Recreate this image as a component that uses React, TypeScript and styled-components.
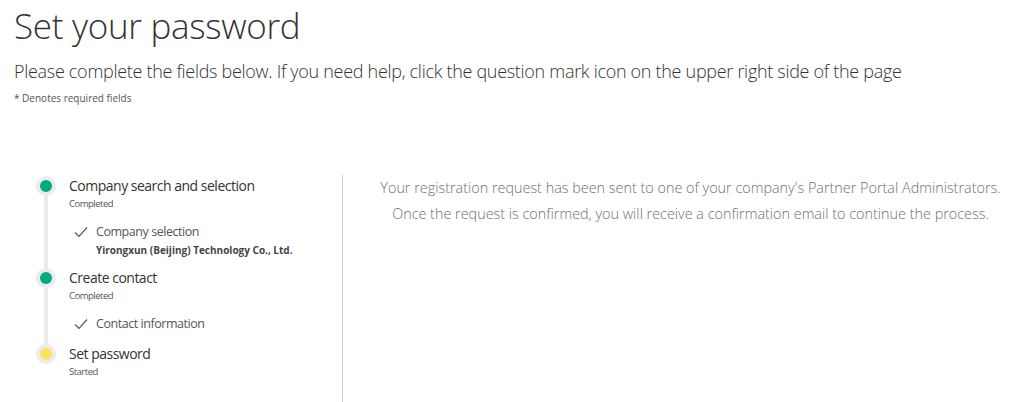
import React from "react";
import styled, { createGlobalStyle } from "styled-components";

const Global = createGlobalStyle`
  html, body { margin: 0; padding: 0; background: #fff; }
  body { font-family: "Open Sans", "Noto Sans", sans-serif; color: #333; }
  * { box-sizing: border-box; }
`;

const Page = styled.div`
  width: 1024px;
  height: 402px;
  overflow: hidden;
  padding: 0 0 0 14px;
`;

const Title = styled.h1`
  margin: 0;
  padding-top: 4px;
  font-size: 35px;
  line-height: 44px;
  font-weight: 300;
  letter-spacing: -0.3px;
  color: #333;
`;

const Subtitle = styled.p`
  margin: 10px 0 0;
  font-size: 18px;
  line-height: 26px;
  font-weight: 300;
  letter-spacing: -0.3px;
  color: #333;
`;

const Required = styled.p`
  margin: 7px 0 0;
  font-size: 10px;
  line-height: 14px;
  color: #555;
`;

const Body = styled.div`
  display: flex;
  margin-top: 70px;
  height: 230px;
`;

const StepsCol = styled.div`
  width: 329px;
  padding: 0 0 0 22px;
  border-right: 1px solid #cfcfcf;
  flex-shrink: 0;
  position: relative;
`;

const Track = styled.div`
  position: absolute;
  left: 30px;
  top: 8px;
  width: 4px;
  height: 174px;
  background: #ececec;
`;

const Step = styled.div`
  display: flex;
  align-items: flex-start;
  position: relative;
`;

const Dot = styled.div<{ $color: string }>`
  width: 20px;
  height: 20px;
  border-radius: 50%;
  background: #ececec;
  display: flex;
  align-items: center;
  justify-content: center;
  flex-shrink: 0;
  margin-top: 1px;
  &::after {
    content: "";
    width: 12px;
    height: 12px;
    border-radius: 50%;
    background: ${(p) => p.$color};
  }
`;

const StepText = styled.div`
  margin-left: 13px;
  display: flex;
  flex-direction: column;
`;

const StepTitle = styled.div`
  font-size: 14px;
  line-height: 22px;
  letter-spacing: -0.5px;
  color: #333;
`;

const StepStatus = styled.div`
  font-size: 9.5px;
  line-height: 14px;
  letter-spacing: -0.5px;
  color: #555;
`;

const SubItem = styled.div`
  display: flex;
  align-items: flex-start;
  margin: 11px 0 9px 5px;
`;

const Check = styled.svg`
  width: 14px;
  height: 14px;
  margin-top: 3px;
  flex-shrink: 0;
`;

const SubText = styled.div`
  margin-left: 8px;
  display: flex;
  flex-direction: column;
`;

const SubTitle = styled.div`
  font-size: 12.5px;
  line-height: 20px;
  letter-spacing: -0.45px;
  color: #555;
`;

const SubDetail = styled.div`
  font-size: 10px;
  line-height: 16px;
  font-weight: 700;
  color: #444;
`;

const Message = styled.div`
  flex: 1;
  padding: 0 10px 0 24px;
  text-align: center;
  font-size: 14.4px;
  line-height: 26px;
  font-weight: 300;
  color: #6f6f6f;
`;

const CheckIcon = () => (
  <Check viewBox="0 0 14 14">
    <path d="M1 7.5 L5 11.5 L13 2.5" fill="none" stroke="#555" strokeWidth="1.2" />
  </Check>
);

export default function App() {
  return (
    <Page>
      <Global />
      <Title>Set your password</Title>
      <Subtitle>
        Please complete the fields below. If you need help, click the question mark icon on the upper right side of the page
      </Subtitle>
      <Required>* Denotes required fields</Required>
      <Body>
        <StepsCol>
          <Track />
          <Step>
            <Dot $color="#01a982" />
            <StepText>
              <StepTitle>Company search and selection</StepTitle>
              <StepStatus>Completed</StepStatus>
              <SubItem>
                <CheckIcon />
                <SubText>
                  <SubTitle>Company selection</SubTitle>
                  <SubDetail>Yirongxun (Beijing) Technology Co., Ltd.</SubDetail>
                </SubText>
              </SubItem>
            </StepText>
          </Step>
          <Step>
            <Dot $color="#01a982" />
            <StepText>
              <StepTitle>Create contact</StepTitle>
              <StepStatus>Completed</StepStatus>
              <SubItem>
                <CheckIcon />
                <SubText>
                  <SubTitle>Contact information</SubTitle>
                </SubText>
              </SubItem>
            </StepText>
          </Step>
          <Step>
            <Dot $color="#fee363" />
            <StepText>
              <StepTitle>Set password</StepTitle>
              <StepStatus>Started</StepStatus>
            </StepText>
          </Step>
        </StepsCol>
        <Message>
          Your registration request has been sent to one of your company's Partner Portal Administrators.
          <br />
          Once the request is confirmed, you will receive a confirmation email to continue the process.
        </Message>
      </Body>
    </Page>
  );
}
